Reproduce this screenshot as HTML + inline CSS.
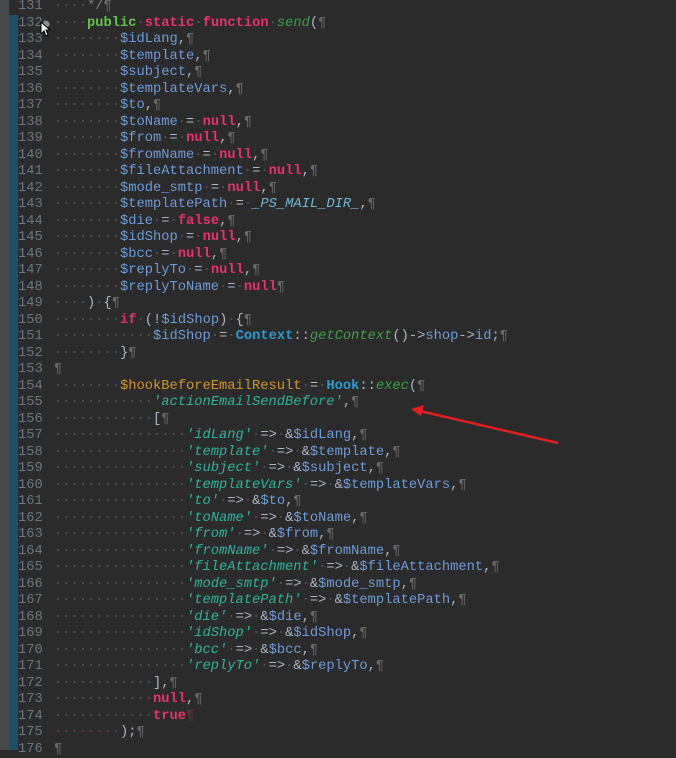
<!DOCTYPE html>
<html><head><meta charset="utf-8"><style>
body{margin:0;width:676px;height:750px;background:#2b2b2b;overflow:hidden;position:relative;font-family:"Liberation Mono",monospace;font-size:13.75px;}
.gl{position:absolute;left:0;top:0;width:9px;height:750px;background:#45484a}
.st{position:absolute;left:9px;top:15px;width:9px;height:735px;background:#1f5068}
.ln{position:absolute;left:0;width:676px;height:16.5px;line-height:16.5px;white-space:pre;color:#a9b7c6}
.num{position:absolute;left:18px;color:#6b7780}
.code{position:absolute;left:54px}
.d{color:#555}.p{color:#6a6a6a}
.k{color:#e8326e;font-weight:bold}.g{color:#62c548;font-weight:bold}
.v{color:#6d9cd8}.s{color:#2fb39b;font-style:italic}.c{color:#2d9ad0;font-weight:bold}
.f{color:#3aa043;font-style:italic}.o{color:#d0962a}.cm{color:#808080}.cs{color:#6fb8d8;font-style:italic}
</style></head><body>
<div class="gl"></div><div class="st"></div>
<div class="ln" style="top:-1px"><span class="num">131</span><span class="code"><span class="d">····</span><span class="cm">*/</span><span class="p">¶</span></span></div>
<div class="ln" style="top:15.5px"><span class="num">132</span><span class="code"><span class="d">····</span><span class="g">public</span><span class="d">·</span><span class="k">static</span><span class="d">·</span><span class="k">function</span><span class="d">·</span><span class="f">send</span>(<span class="p">¶</span></span></div>
<div class="ln" style="top:32px"><span class="num">133</span><span class="code"><span class="d">········</span><span class="v">$idLang</span>,<span class="p">¶</span></span></div>
<div class="ln" style="top:48.5px"><span class="num">134</span><span class="code"><span class="d">········</span><span class="v">$template</span>,<span class="p">¶</span></span></div>
<div class="ln" style="top:65px"><span class="num">135</span><span class="code"><span class="d">········</span><span class="v">$subject</span>,<span class="p">¶</span></span></div>
<div class="ln" style="top:81.5px"><span class="num">136</span><span class="code"><span class="d">········</span><span class="v">$templateVars</span>,<span class="p">¶</span></span></div>
<div class="ln" style="top:98px"><span class="num">137</span><span class="code"><span class="d">········</span><span class="v">$to</span>,<span class="p">¶</span></span></div>
<div class="ln" style="top:114.5px"><span class="num">138</span><span class="code"><span class="d">········</span><span class="v">$toName</span><span class="d">·</span>=<span class="d">·</span><span class="k">null</span>,<span class="p">¶</span></span></div>
<div class="ln" style="top:131px"><span class="num">139</span><span class="code"><span class="d">········</span><span class="v">$from</span><span class="d">·</span>=<span class="d">·</span><span class="k">null</span>,<span class="p">¶</span></span></div>
<div class="ln" style="top:147.5px"><span class="num">140</span><span class="code"><span class="d">········</span><span class="v">$fromName</span><span class="d">·</span>=<span class="d">·</span><span class="k">null</span>,<span class="p">¶</span></span></div>
<div class="ln" style="top:164px"><span class="num">141</span><span class="code"><span class="d">········</span><span class="v">$fileAttachment</span><span class="d">·</span>=<span class="d">·</span><span class="k">null</span>,<span class="p">¶</span></span></div>
<div class="ln" style="top:180.5px"><span class="num">142</span><span class="code"><span class="d">········</span><span class="v">$mode_smtp</span><span class="d">·</span>=<span class="d">·</span><span class="k">null</span>,<span class="p">¶</span></span></div>
<div class="ln" style="top:197px"><span class="num">143</span><span class="code"><span class="d">········</span><span class="v">$templatePath</span><span class="d">·</span>=<span class="d">·</span><span class="cs">_PS_MAIL_DIR_</span>,<span class="p">¶</span></span></div>
<div class="ln" style="top:213.5px"><span class="num">144</span><span class="code"><span class="d">········</span><span class="v">$die</span><span class="d">·</span>=<span class="d">·</span><span class="k">false</span>,<span class="p">¶</span></span></div>
<div class="ln" style="top:230px"><span class="num">145</span><span class="code"><span class="d">········</span><span class="v">$idShop</span><span class="d">·</span>=<span class="d">·</span><span class="k">null</span>,<span class="p">¶</span></span></div>
<div class="ln" style="top:246.5px"><span class="num">146</span><span class="code"><span class="d">········</span><span class="v">$bcc</span><span class="d">·</span>=<span class="d">·</span><span class="k">null</span>,<span class="p">¶</span></span></div>
<div class="ln" style="top:263px"><span class="num">147</span><span class="code"><span class="d">········</span><span class="v">$replyTo</span><span class="d">·</span>=<span class="d">·</span><span class="k">null</span>,<span class="p">¶</span></span></div>
<div class="ln" style="top:279.5px"><span class="num">148</span><span class="code"><span class="d">········</span><span class="v">$replyToName</span><span class="d">·</span>=<span class="d">·</span><span class="k">null</span><span class="p">¶</span></span></div>
<div class="ln" style="top:296px"><span class="num">149</span><span class="code"><span class="d">····</span>)<span class="d">·</span>{<span class="p">¶</span></span></div>
<div class="ln" style="top:312.5px"><span class="num">150</span><span class="code"><span class="d">········</span><span class="k">if</span><span class="d">·</span>(!<span class="v">$idShop</span>)<span class="d">·</span>{<span class="p">¶</span></span></div>
<div class="ln" style="top:329px"><span class="num">151</span><span class="code"><span class="d">············</span><span class="v">$idShop</span><span class="d">·</span>=<span class="d">·</span><span class="c">Context</span>::<span class="f">getContext</span>()-&gt;<span class="v">shop</span>-&gt;<span class="v">id</span>;<span class="p">¶</span></span></div>
<div class="ln" style="top:345.5px"><span class="num">152</span><span class="code"><span class="d">········</span>}<span class="p">¶</span></span></div>
<div class="ln" style="top:362px"><span class="num">153</span><span class="code"><span class="p">¶</span></span></div>
<div class="ln" style="top:378.5px"><span class="num">154</span><span class="code"><span class="d">········</span><span class="o">$hookBeforeEmailResult</span><span class="d">·</span>=<span class="d">·</span><span class="c">Hook</span>::<span class="f">exec</span>(<span class="p">¶</span></span></div>
<div class="ln" style="top:395px"><span class="num">155</span><span class="code"><span class="d">············</span><span class="s">'actionEmailSendBefore'</span>,<span class="p">¶</span></span></div>
<div class="ln" style="top:411.5px"><span class="num">156</span><span class="code"><span class="d">············</span>[<span class="p">¶</span></span></div>
<div class="ln" style="top:428px"><span class="num">157</span><span class="code"><span class="d">················</span><span class="s">'idLang'</span><span class="d">·</span>=&gt;<span class="d">·</span>&amp;<span class="v">$idLang</span>,<span class="p">¶</span></span></div>
<div class="ln" style="top:444.5px"><span class="num">158</span><span class="code"><span class="d">················</span><span class="s">'template'</span><span class="d">·</span>=&gt;<span class="d">·</span>&amp;<span class="v">$template</span>,<span class="p">¶</span></span></div>
<div class="ln" style="top:461px"><span class="num">159</span><span class="code"><span class="d">················</span><span class="s">'subject'</span><span class="d">·</span>=&gt;<span class="d">·</span>&amp;<span class="v">$subject</span>,<span class="p">¶</span></span></div>
<div class="ln" style="top:477.5px"><span class="num">160</span><span class="code"><span class="d">················</span><span class="s">'templateVars'</span><span class="d">·</span>=&gt;<span class="d">·</span>&amp;<span class="v">$templateVars</span>,<span class="p">¶</span></span></div>
<div class="ln" style="top:494px"><span class="num">161</span><span class="code"><span class="d">················</span><span class="s">'to'</span><span class="d">·</span>=&gt;<span class="d">·</span>&amp;<span class="v">$to</span>,<span class="p">¶</span></span></div>
<div class="ln" style="top:510.5px"><span class="num">162</span><span class="code"><span class="d">················</span><span class="s">'toName'</span><span class="d">·</span>=&gt;<span class="d">·</span>&amp;<span class="v">$toName</span>,<span class="p">¶</span></span></div>
<div class="ln" style="top:527px"><span class="num">163</span><span class="code"><span class="d">················</span><span class="s">'from'</span><span class="d">·</span>=&gt;<span class="d">·</span>&amp;<span class="v">$from</span>,<span class="p">¶</span></span></div>
<div class="ln" style="top:543.5px"><span class="num">164</span><span class="code"><span class="d">················</span><span class="s">'fromName'</span><span class="d">·</span>=&gt;<span class="d">·</span>&amp;<span class="v">$fromName</span>,<span class="p">¶</span></span></div>
<div class="ln" style="top:560px"><span class="num">165</span><span class="code"><span class="d">················</span><span class="s">'fileAttachment'</span><span class="d">·</span>=&gt;<span class="d">·</span>&amp;<span class="v">$fileAttachment</span>,<span class="p">¶</span></span></div>
<div class="ln" style="top:576.5px"><span class="num">166</span><span class="code"><span class="d">················</span><span class="s">'mode_smtp'</span><span class="d">·</span>=&gt;<span class="d">·</span>&amp;<span class="v">$mode_smtp</span>,<span class="p">¶</span></span></div>
<div class="ln" style="top:593px"><span class="num">167</span><span class="code"><span class="d">················</span><span class="s">'templatePath'</span><span class="d">·</span>=&gt;<span class="d">·</span>&amp;<span class="v">$templatePath</span>,<span class="p">¶</span></span></div>
<div class="ln" style="top:609.5px"><span class="num">168</span><span class="code"><span class="d">················</span><span class="s">'die'</span><span class="d">·</span>=&gt;<span class="d">·</span>&amp;<span class="v">$die</span>,<span class="p">¶</span></span></div>
<div class="ln" style="top:626px"><span class="num">169</span><span class="code"><span class="d">················</span><span class="s">'idShop'</span><span class="d">·</span>=&gt;<span class="d">·</span>&amp;<span class="v">$idShop</span>,<span class="p">¶</span></span></div>
<div class="ln" style="top:642.5px"><span class="num">170</span><span class="code"><span class="d">················</span><span class="s">'bcc'</span><span class="d">·</span>=&gt;<span class="d">·</span>&amp;<span class="v">$bcc</span>,<span class="p">¶</span></span></div>
<div class="ln" style="top:659px"><span class="num">171</span><span class="code"><span class="d">················</span><span class="s">'replyTo'</span><span class="d">·</span>=&gt;<span class="d">·</span>&amp;<span class="v">$replyTo</span>,<span class="p">¶</span></span></div>
<div class="ln" style="top:675.5px"><span class="num">172</span><span class="code"><span class="d">············</span>],<span class="p">¶</span></span></div>
<div class="ln" style="top:692px"><span class="num">173</span><span class="code"><span class="d">············</span><span class="k">null</span>,<span class="p">¶</span></span></div>
<div class="ln" style="top:708.5px"><span class="num">174</span><span class="code"><span class="d">············</span><span class="k">true</span><span class="p" style="color:#6a3040">¶</span></span></div>
<div class="ln" style="top:725px"><span class="num">175</span><span class="code"><span class="d" style="color:#6a3a48">········</span>);<span class="p">¶</span></span></div>
<div class="ln" style="top:741.5px"><span class="num">176</span><span class="code"><span class="p">¶</span></span></div>
<svg style="position:absolute;left:0;top:0" width="676" height="750">
<circle cx="46" cy="24" r="3.5" fill="#8a8f94"/>
<path d="M41 22 L41 34 L44 31 L46 36 L48 35 L46 30 L50 30 Z" fill="#fff" stroke="#000" stroke-width="1"/>
<line x1="558" y1="443" x2="420" y2="411" stroke="#e02020" stroke-width="2.5"/>
<path d="M411 409 L424 405 L421 416 Z" fill="#e02020"/>
</svg>
</body></html>
